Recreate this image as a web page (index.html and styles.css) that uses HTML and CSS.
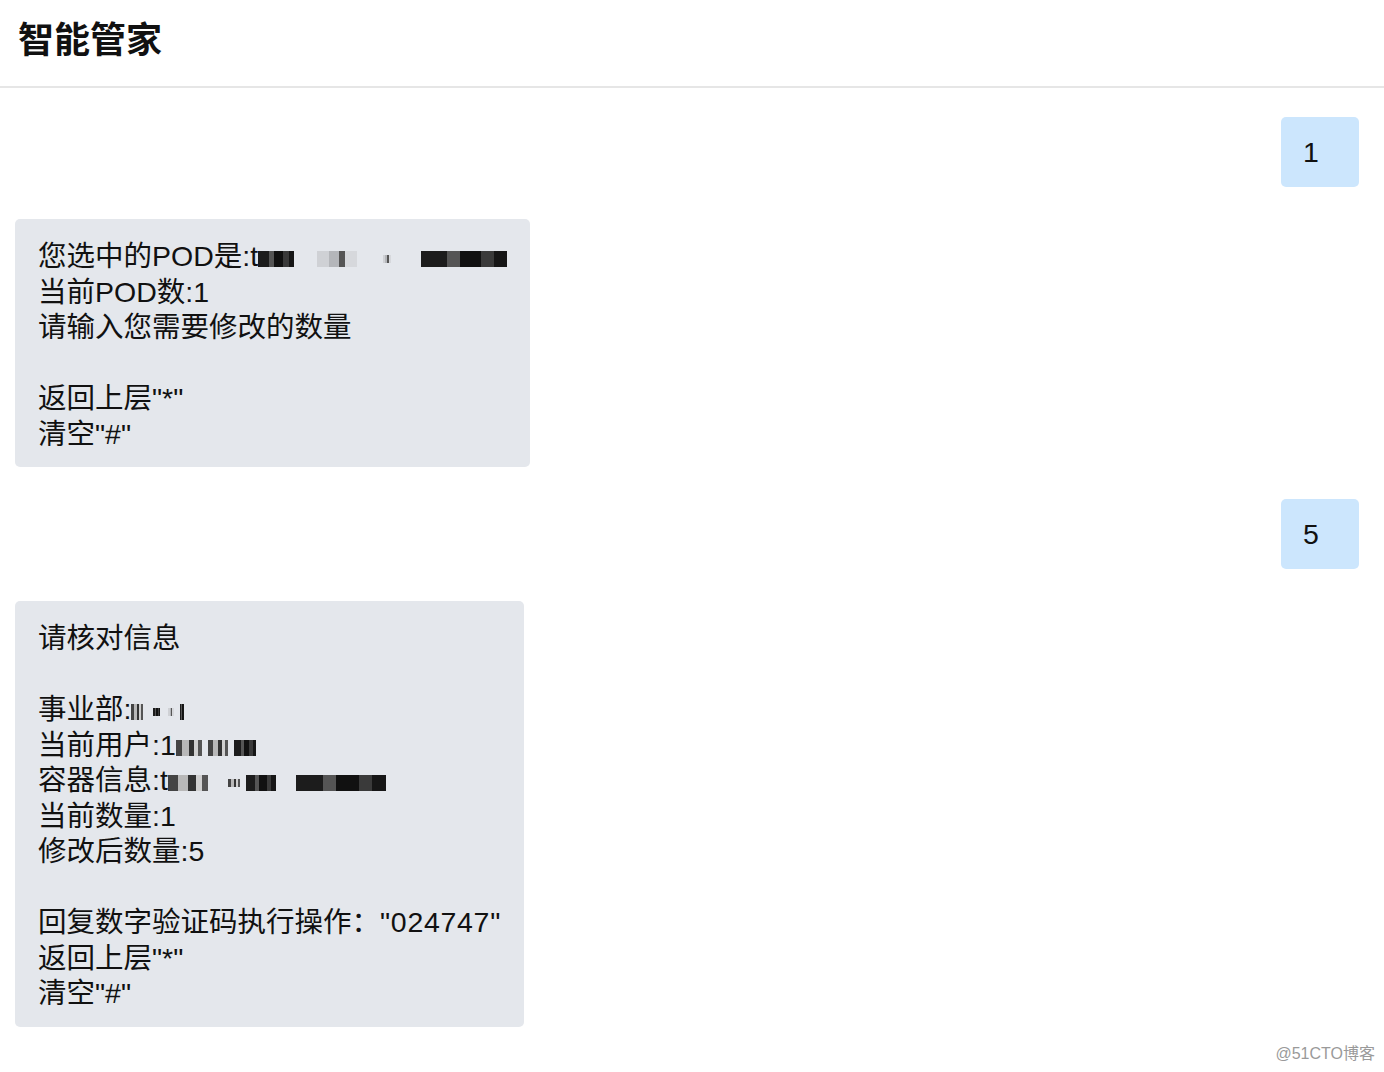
FILE: index.html
```html
<!DOCTYPE html>
<html lang="zh-CN">

<head>
  <meta charset="UTF-8">
  <meta name="viewport" content="width=device-width, initial-scale=1.0">
  <title>智能管家</title>
  <link rel="stylesheet" href="styles.css">
</head>

<body>
  <header class="top-bar">
    <h1>智能管家</h1>
  </header>

  <main class="chat">
    <div class="msg msg-user">
      <div class="bubble bubble-user">1</div>
    </div>

    <div class="msg msg-bot">
      <div class="bubble bubble-bot">
        <div class="line">您选中的POD是:t<span class="mosaic"><i class="px d w36"></i><i class="sp w23"></i><i class="px l w40"></i><i class="sp w26"></i><i class="px l w8 sm"></i><i class="sp w30"></i><i class="px d w86"></i></span></div>
        <div class="line">当前POD数:1</div>
        <div class="line">请输入您需要修改的数量</div>
        <div class="line blank"></div>
        <div class="line">返回上层"*"</div>
        <div class="line">清空"#"</div>
      </div>
    </div>

    <div class="msg msg-user">
      <div class="bubble bubble-user">5</div>
    </div>

    <div class="msg msg-bot">
      <div class="bubble bubble-bot">
        <div class="line">请核对信息</div>
        <div class="line blank"></div>
        <div class="line">事业部:<span class="mosaic"><i class="px m w12"></i><i class="sp w10"></i><i class="px d w7 sm"></i><i class="sp w8"></i><i class="px l w6 sm"></i><i class="sp w6"></i><i class="px d w4"></i></span></div>
        <div class="line">当前用户:1<span class="mosaic"><i class="px m w26"></i><i class="sp w6"></i><i class="px m w20"></i><i class="sp w6"></i><i class="px d w22"></i></span></div>
        <div class="line">容器信息:t<span class="mosaic"><i class="px m w40"></i><i class="sp w20"></i><i class="px m w12 sm"></i><i class="sp w6"></i><i class="px d w30"></i><i class="sp w20"></i><i class="px d w90"></i></span></div>
        <div class="line">当前数量:1</div>
        <div class="line">修改后数量:5</div>
        <div class="line blank"></div>
        <div class="line">回复数字验证码执行操作：<span class="code">"024747"</span></div>
        <div class="line">返回上层"*"</div>
        <div class="line">清空"#"</div>
      </div>
    </div>
  </main>

  <div class="watermark">@51CTO博客</div>
</body>

</html>
```

FILE: styles.css
```css
:root {
  --text: #111111;
  --border: #e6e6e6;
  --bot-bg: #e4e7ec;
  --user-bg: #cce6fd;
}

* {
  box-sizing: border-box;
  margin: 0;
  padding: 0;
}

body {
  font-family: "Liberation Sans", "Noto Sans CJK SC", sans-serif;
  color: var(--text);
  background: #ffffff;
  min-height: 100vh;
  position: relative;
}

.top-bar {
  height: 88px;
  border-bottom: 2px solid var(--border);
  padding: 0 18px;
  display: flex;
  align-items: center;
}

.top-bar h1 {
  font-size: 36px;
  font-weight: 700;
  line-height: 1;
  margin-top: -4px;
  color: #111111;
}

.chat {
  padding: 29px 25px 30px 15px;
  display: flex;
  flex-direction: column;
  gap: 32px;
}

.msg {
  display: flex;
}

.msg-user {
  justify-content: flex-end;
}

.msg-bot {
  justify-content: flex-start;
}

.bubble {
  border-radius: 5px;
  font-size: 28.5px;
  line-height: 35.5px;
}

.bubble-user {
  background: var(--user-bg);
  min-width: 78px;
  height: 70px;
  padding: 18px 22px;
}

.bubble-bot {
  background: var(--bot-bg);
  padding: 20px 23px 15px;
}

.line {
  white-space: nowrap;
  height: 35.5px;
}

.code {
  letter-spacing: 0.7px;
}

/* pixelated (blurred) parts of the messages */
.mosaic {
  display: inline-flex;
  align-items: center;
  height: 18px;
  vertical-align: -1px;
}

.mosaic i {
  display: inline-block;
  height: 16px;
}

.mosaic .sm {
  height: 8px;
}

.px.d {
  background: linear-gradient(90deg, #1c1c1c 0 30%, #555 30% 45%, #111 45% 70%, #3a3a3a 70% 85%, #161616 85%);
}

.px.m {
  background: linear-gradient(90deg, #444 0 25%, #b8b8b8 25% 50%, #333 50% 70%, #d0d0d0 70% 85%, #555 85%);
}

.px.l {
  background: linear-gradient(90deg, #cfd1d5 0 30%, #b4b6ba 30% 55%, #555 55% 70%, #d6d8dc 70%);
}

.w4 { width: 4px; }
.w6 { width: 6px; }
.w7 { width: 7px; }
.w8 { width: 8px; }
.w10 { width: 10px; }
.w12 { width: 12px; }
.w20 { width: 20px; }
.w22 { width: 22px; }
.w23 { width: 23px; }
.w26 { width: 26px; }
.w30 { width: 30px; }
.w36 { width: 36px; }
.w40 { width: 40px; }
.w86 { width: 86px; }
.w90 { width: 90px; }

.watermark {
  position: absolute;
  right: 9px;
  bottom: 8px;
  font-size: 16px;
  color: #9a9a9a;
}
```
